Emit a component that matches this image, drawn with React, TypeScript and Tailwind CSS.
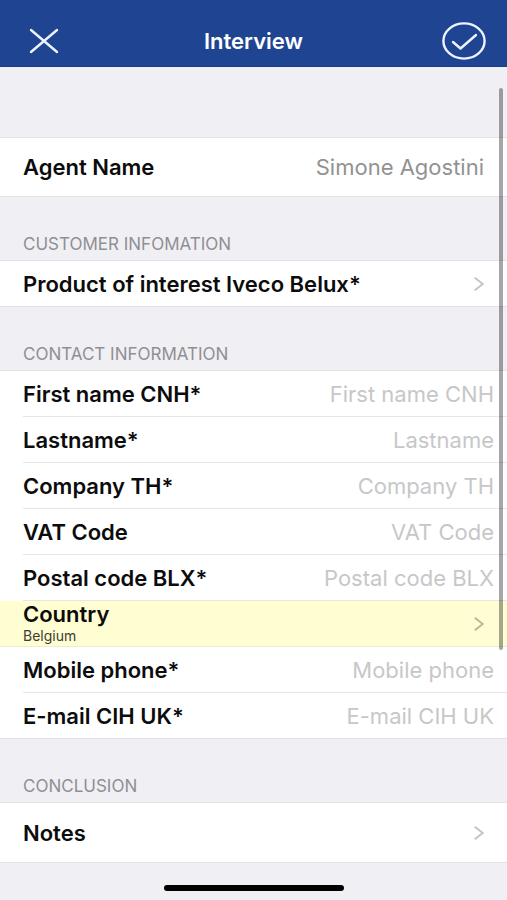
import type { ReactNode } from "react";

const contactFields = [
  { id: "first-name", label: "First name CNH*", placeholder: "First name CNH", type: "text" },
  { id: "last-name", label: "Lastname*", placeholder: "Lastname", type: "text" },
  { id: "company", label: "Company TH*", placeholder: "Company TH", type: "text" },
  { id: "vat", label: "VAT Code", placeholder: "VAT Code", type: "text" },
  { id: "postal", label: "Postal code BLX*", placeholder: "Postal code BLX", type: "text" },
];

const reachFields = [
  { id: "mobile", label: "Mobile phone*", placeholder: "Mobile phone", type: "tel" },
  { id: "email", label: "E-mail CIH UK*", placeholder: "E-mail CIH UK", type: "email" },
];

function Chevron({ className }: { className: string }) {
  return (
    <svg viewBox="0 0 10 14" className={`w-[10px] h-[14px] shrink-0 ${className}`} fill="none" stroke="currentColor" strokeWidth="2" aria-hidden="true">
      <path d="M0.8 0.8 L8.8 7 L0.8 13.2" />
    </svg>
  );
}

function SectionTitle({ children }: { children: ReactNode }) {
  return (
    <h2 className="h-16 flex items-end px-[23px] pb-[6px] border-b border-[#e2e2e6] text-[17px] leading-5 text-[#8f8f94]">
      {children}
    </h2>
  );
}

type Field = { id: string; label: string; placeholder: string; type: string };

function FieldRow({ field, last }: { field: Field; last?: boolean }) {
  return (
    <div className={`pl-[23px] ${last ? "border-b border-[#e2e2e6]" : ""}`}>
      <div className={`flex items-center gap-3 pr-[13px] ${last ? "h-[45px]" : "h-[46px] border-b border-[#e6e6e8]"}`}>
        <label htmlFor={field.id} className="shrink-0 font-semibold">
          {field.label}
        </label>
        <input
          id={field.id}
          type={field.type}
          placeholder={field.placeholder}
          className="h-8 min-w-0 flex-1 bg-transparent text-right leading-8 outline-none placeholder:text-[#c7c7c9]"
        />
      </div>
    </div>
  );
}

export default function App() {
  return (
    <div className="relative min-h-screen flex flex-col bg-[#efeff4] font-['Inter','Liberation_Sans',sans-serif] text-[22px] leading-6 text-[#0c0c0c]">
      <header className="h-[67px] shrink-0 grid grid-cols-[1fr_auto_1fr] items-center px-[21px] pt-4 bg-[#1f4592] border-b border-[#1b3c80] text-white">
        <button type="button" aria-label="Close" className="justify-self-start pl-2">
          <svg viewBox="0 0 30 26" className="w-[30px] h-[26px]" fill="none" stroke="#eef3ff" strokeWidth="2.4" strokeLinecap="round">
            <path d="M2 2 L28 24 M28 2 L2 24" />
          </svg>
        </button>
        <h1 className="font-semibold">Interview</h1>
        <button type="button" aria-label="Save" className="justify-self-end">
          <svg viewBox="0 0 44 38" className="w-[44px] h-[38px]" fill="none" stroke="#eef3ff" strokeWidth="2.4" strokeLinecap="round" strokeLinejoin="round">
            <ellipse cx="22" cy="19" rx="20.6" ry="17.6" />
            <path d="M11 20 L18.5 26.5 L34 13" />
          </svg>
        </button>
      </header>

      <main>
        <div className="mt-[70px] h-[60px] flex items-center gap-3 px-[23px] bg-white border-y border-[#e2e2e6]">
          <label htmlFor="agent" className="shrink-0 font-semibold">
            Agent Name
          </label>
          <input id="agent" readOnly defaultValue="Simone Agostini" className="h-8 min-w-0 flex-1 bg-transparent text-right leading-8 text-[#929292] outline-none" />
        </div>

        <SectionTitle>CUSTOMER INFOMATION</SectionTitle>
        <button type="button" className="w-full h-[46px] flex items-center justify-between px-[23px] bg-white border-b border-[#e2e2e6] text-left">
          <span className="font-semibold">Product of interest Iveco Belux*</span>
          <Chevron className="text-[#c4c4c7]" />
        </button>

        <SectionTitle>CONTACT INFORMATION</SectionTitle>
        <div className="bg-white">
          {contactFields.map((field) => (
            <FieldRow key={field.id} field={field} />
          ))}
          <button type="button" className="w-full h-[46px] flex items-center justify-between px-[23px] bg-[#fefed2] border-b border-[#ececd4] text-left">
            <span className="flex flex-col">
              <span className="font-semibold">Country</span>
              <span className="text-[14px] leading-5 text-[#3c3c32]">Belgium</span>
            </span>
            <Chevron className="text-[#b9b995]" />
          </button>
          {reachFields.map((field, i) => (
            <FieldRow key={field.id} field={field} last={i === reachFields.length - 1} />
          ))}
        </div>

        <SectionTitle>CONCLUSION</SectionTitle>
        <button type="button" className="w-full h-[60px] flex items-center justify-between px-[23px] bg-white border-b border-[#e2e2e6] text-left">
          <span className="font-semibold">Notes</span>
          <Chevron className="text-[#c4c4c7]" />
        </button>
      </main>

      <footer className="mt-auto flex justify-center pb-[9px]">
        <div className="w-[180px] h-[6px] rounded-full bg-black" />
      </footer>

      {/* scroll indicator */}
      <div className="absolute right-1 top-[88px] w-1 h-[562px] rounded-full bg-black/35" />
    </div>
  );
}
